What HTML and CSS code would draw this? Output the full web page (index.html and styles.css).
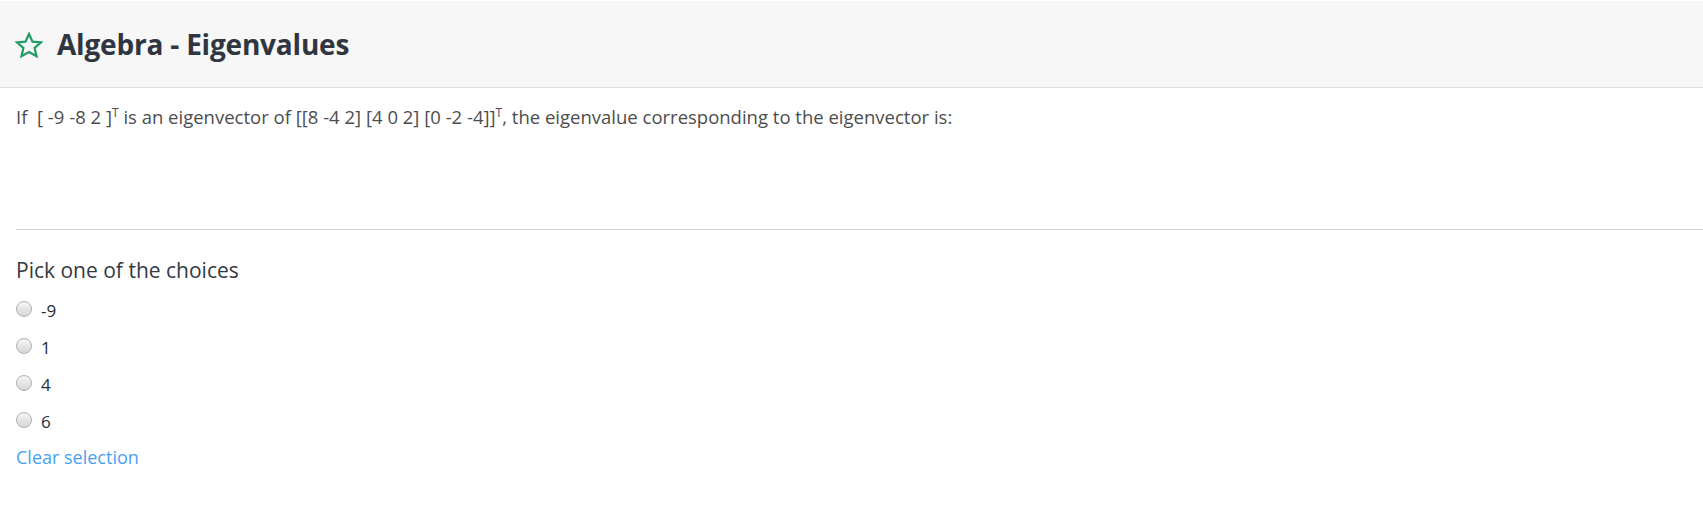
FILE: index.html
```html
<!DOCTYPE html>
<html>
<head>
<meta charset="utf-8">
<link rel="stylesheet" href="styles.css">
</head>
<body>
<header class="header">
  <svg class="star" width="30" height="26" viewBox="0 0 30 26" aria-hidden="true">
    <polygon points="15,2 18.5,9.6 27,10.4 20.6,16 22.5,24.2 15,20 7.5,24.2 9.4,16 3,10.4 11.5,9.6" fill="none" stroke="#229b62" stroke-width="2.2" stroke-linejoin="miter"/>
  </svg>
  <h1 class="title">Algebra - Eigenvalues</h1>
</header>
<main class="content">
  <p class="question">If &nbsp;[ -9 -8 2 ]<sup>T</sup> is an eigenvector of [[8 -4 2] [4 0 2] [0 -2 -4]]<sup>T</sup>, the eigenvalue corresponding to the eigenvector is:</p>
  <hr class="divider">
  <h2 class="pick">Pick one of the choices</h2>
  <ul class="choices">
    <li class="choice"><span class="radio"></span><span class="label">-9</span></li>
    <li class="choice"><span class="radio"></span><span class="label">1</span></li>
    <li class="choice"><span class="radio"></span><span class="label">4</span></li>
    <li class="choice"><span class="radio"></span><span class="label">6</span></li>
  </ul>
  <a class="clear" href="#">Clear selection</a>
</main>
</body>
</html>
```
FILE: styles.css
```css
html, body {
  margin: 0;
  padding: 0;
  background: #ffffff;
  font-family: "Open Sans", "Noto Sans", sans-serif;
}

.header {
  display: flex;
  align-items: center;
  gap: 13px;
  height: 86px;
  margin-top: 1px;
  padding-left: 14px;
  background: #f7f7f7;
  border-bottom: 1px solid #dedede;
}

.star {
  display: block;
  margin-top: 2px;
}

.title {
  margin: 0;
  font-size: 28px;
  font-weight: 700;
  color: #2f3541;
  letter-spacing: -0.2px;
}

.content {
  padding-left: 16px;
}

.question {
  margin: 0;
  padding-top: 16px;
  height: 125px;
  font-size: 18.5px;
  color: #4d4d4d;
  line-height: 26px;
}

.question sup {
  font-size: 12px;
  line-height: 0;
}

.divider {
  margin: 0;
  border: 0;
  border-top: 1px solid #d6d6d6;
}

.pick {
  margin: 0;
  padding-top: 26px;
  font-size: 21px;
  font-weight: 500;
  color: #333a44;
  line-height: 28px;
}

.choices {
  list-style: none;
  margin: 0;
  padding: 0;
  padding-top: 15px;
  display: flex;
  flex-direction: column;
  gap: 13px;
}

.choice {
  display: flex;
  align-items: center;
  gap: 9px;
  height: 24px;
  font-size: 17px;
  color: #262c36;
}

.radio {
  width: 14px;
  height: 14px;
  border-radius: 50%;
  border: 1px solid #b0b0b0;
  background: linear-gradient(#f6f6f6, #d6d6d6);
  margin-top: -5px;
}

.label {
  line-height: 24px;
}

.clear {
  display: block;
  margin-top: 11px;
  font-size: 18px;
  color: #4a9ff0;
  text-decoration: none;
  line-height: 24px;
}
```
